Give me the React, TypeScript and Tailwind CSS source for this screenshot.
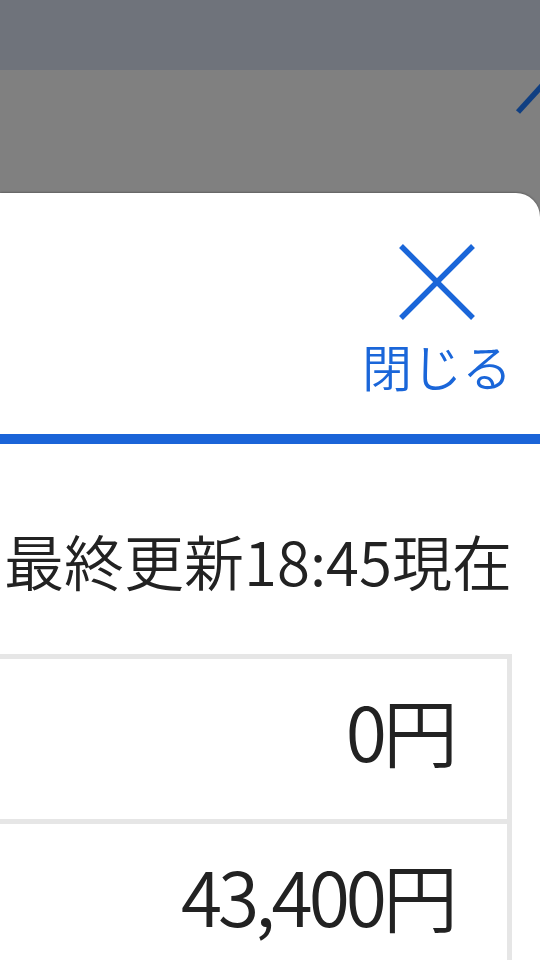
import React from "react";

const font = { fontFamily: '"Noto Sans CJK JP", "Noto Sans", sans-serif' };

function CloseButton() {
  return (
    <button className="flex flex-col items-center text-[#1a66d9]" style={font}>
      <svg width="76" height="76" viewBox="0 0 76 76" fill="none" stroke="currentColor" strokeWidth="5.5">
        <path d="M2 2 L74 74 M74 2 L2 74" />
      </svg>
      <span className="mt-[20px] text-[50px] font-[350] leading-none">閉じる</span>
    </button>
  );
}

function PriceRow({ value }: { value: string }) {
  return (
    <div className="flex h-[165px] shrink-0 items-center justify-end border-r-[5px] border-t-[5px] border-[#e6e6e6] pb-[20px] pr-[53px]">
      <span className="text-[75px] font-[350] leading-none tracking-[-4px] text-[#222222]">{value}</span>
    </div>
  );
}

export default function App() {
  return (
    <div className="relative flex h-[960px] w-[540px] flex-col overflow-hidden bg-[#808080]" style={font}>
      <div className="h-[70px] shrink-0 bg-[#6f737b]" />
      <div className="flex h-[123px] shrink-0 justify-end">
        <svg width="24" height="60" viewBox="0 0 24 60" className="overflow-visible">
          <path d="M2 42 L32 9" stroke="#103f82" strokeWidth="5.5" fill="none" />
        </svg>
      </div>
      <div className="flex flex-1 shrink-0 flex-col rounded-tr-[24px] bg-white shadow-[0_-1px_2px_rgba(0,0,0,0.25)]">
        <div className="flex h-[241px] shrink-0 items-start justify-end pr-[28px] pt-[51px]">
          <CloseButton />
        </div>
        <div className="h-[10px] shrink-0 bg-[#1a64d8]" />
        <div className="flex flex-col pr-[28px]">
          <div className="mt-[86px] text-right text-[60px] font-[350] leading-none text-[#222222]">最終更新18:45現在</div>
          <div className="-ml-[10px] mt-[64px] flex flex-col">
            <PriceRow value="0円" />
            <PriceRow value="43,400円" />
          </div>
        </div>
      </div>
    </div>
  );
}
